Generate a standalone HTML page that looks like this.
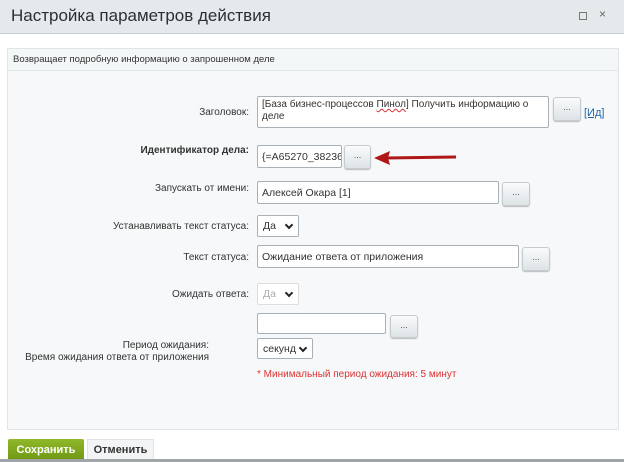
<!DOCTYPE html>
<html><head><meta charset="utf-8"><style>
body{margin:0;width:624px;height:462px;overflow:hidden;background:#fff;font-family:"Liberation Sans",Arial,sans-serif;font-size:11px;color:#333;position:relative}
.a{position:absolute}
.hdr{left:0;top:0;width:624px;height:33px;background:#e4eaec;border-bottom:1px solid #c6ccd0}
.title{left:11px;top:6px;font-size:17px;color:#2a2f33}
.box{left:7px;top:48px;width:610px;height:380px;background:#f6f8f9;border:1px solid #e0e5e8}
.desc{left:8px;top:49px;width:610px;height:21px;background:#f4f7f8;border-bottom:1px solid #e3e7ea;}
.lbl{text-align:right;width:240px;left:9px;font-size:10px;color:#333}
.inp{background:#fff;border:1px solid #a9b1b6;border-radius:2px;box-sizing:border-box;font-size:10.5px;padding:3px 4px;color:#333;line-height:12px;overflow:hidden;white-space:nowrap}
.btn{background:linear-gradient(#fafbfb,#dde3e6);border:1px solid #c5ccd0;border-radius:3px;box-sizing:border-box;text-align:center;font-size:9px;color:#555;line-height:18px;box-shadow:0 1px 1px #bbb}
.sel{background:#fff;border:1px solid #a9b1b6;border-radius:2px;box-sizing:border-box;font-size:10.5px;padding:4px 5px;}
.sel:after{content:"";position:absolute;right:6px;top:6px;width:4px;height:4px;border-right:2px solid #222;border-bottom:2px solid #222;transform:rotate(45deg)}
</style></head><body>
<div class="a hdr"></div>
<div class="a title">Настройка параметров действия</div>
<div class="a" style="left:579px;top:12px;width:6px;height:6px;border:1px solid #777"></div>
<div class="a" style="left:599px;top:7px;font-size:12px;color:#666">×</div>
<div class="a box"></div>
<div class="a desc"></div>
<div class="a" style="left:13px;top:54px;font-size:9.5px;color:#333">Возвращает подробную информацию о запрошенном деле</div>

<div class="a lbl" style="top:107px">Заголовок:</div>
<div class="a inp" style="left:257px;top:96px;width:292px;height:32px;white-space:normal;padding:2px 4px;font-size:10px">[База бизнес-процессов <u style="text-decoration:underline wavy #d33">Пинол</u>] Получить информацию о деле</div>
<div class="a btn" style="left:553px;top:97px;width:28px;height:24px">...</div>
<div class="a" style="left:584px;top:107px;color:#2067b0;font-size:11px;text-decoration:underline">[Ид]</div>

<div class="a lbl" style="top:145px;font-weight:bold">Идентификатор дела:</div>
<div class="a inp" style="left:257px;top:145px;width:85px;height:23px;padding-top:5px">{=A65270_38236</div>
<div class="a btn" style="left:344px;top:145px;width:27px;height:24px">...</div>
<svg class="a" style="left:372px;top:150px" width="88" height="16"><path d="M14 8 L84 7" stroke="#b01818" stroke-width="3"/><path d="M2 8 L18 1 L16 8 L18 15 Z" fill="#b01818"/></svg>

<div class="a lbl" style="top:183px">Запускать от имени:</div>
<div class="a inp" style="left:257px;top:181px;width:242px;height:23px;padding-top:5px">Алексей Окара [1]</div>
<div class="a btn" style="left:502px;top:182px;width:28px;height:24px">...</div>

<div class="a lbl" style="top:221px">Устанавливать текст статуса:</div>
<div class="a sel" style="left:257px;top:215px;width:42px;height:22px">Да</div>

<div class="a lbl" style="top:252px">Текст статуса:</div>
<div class="a inp" style="left:257px;top:245px;width:262px;height:23px;padding-top:5px">Ожидание ответа от приложения</div>
<div class="a btn" style="left:522px;top:247px;width:28px;height:24px">...</div>

<div class="a lbl" style="top:289px">Ожидать ответа:</div>
<div class="a sel" style="left:257px;top:283px;width:42px;height:22px;color:#aaa;border-color:#ddd">Да</div>

<div class="a inp" style="left:257px;top:313px;width:129px;height:21px"></div>
<div class="a btn" style="left:390px;top:315px;width:28px;height:23px">...</div>
<div class="a lbl" style="top:340px;width:200px">Период ожидания:</div>
<div class="a lbl" style="top:352px;width:200px">Время ожидания ответа от приложения</div>
<div class="a sel" style="left:257px;top:338px;width:56px;height:21px">секунд</div>
<div class="a" style="left:257px;top:369px;color:#d33;font-size:10px">* Минимальный период ожидания: 5 минут</div>

<div class="a" style="left:8px;top:439px;width:76px;height:23px;background:linear-gradient(#8fb82a,#6d9512);color:#fff;font-weight:bold;text-align:center;line-height:22px;font-size:11px;border-radius:2px">Сохранить</div>
<div class="a" style="left:87px;top:439px;width:67px;height:23px;background:#f2f4f5;border:1px solid #e0e4e6;box-sizing:border-box;color:#333;font-weight:bold;text-align:center;line-height:21px;font-size:11px">Отменить</div>
<div class="a" style="left:0;top:459px;width:624px;height:3px;background:#a0a5a8"></div>
</body></html>
